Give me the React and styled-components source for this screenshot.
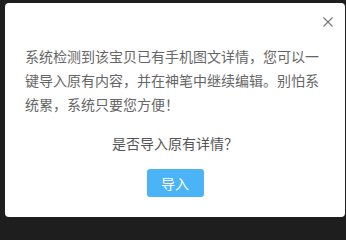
import React from "react";
import styled, { createGlobalStyle } from "styled-components";

const Global = createGlobalStyle`
  html, body {
    margin: 0;
    padding: 0;
    background: #1e1e1e;
  }
  body {
    font-family: "Noto Sans CJK SC", "Liberation Sans", sans-serif;
  }
`;

const Stage = styled.div`
  width: 346px;
  height: 223px;
  padding: 3px 1px 0 5px;
  box-sizing: border-box;
`;

const Dialog = styled.div`
  position: relative;
  width: 340px;
  height: 214px;
  background: #fff;
  border-radius: 4px;
  box-sizing: border-box;
  padding: 41px 20px 0 20px;
  display: flex;
  flex-direction: column;
  align-items: center;
`;

const Close = styled.button`
  position: absolute;
  top: 11px;
  right: 9px;
  width: 16px;
  height: 16px;
  padding: 0;
  border: 0;
  background: none;
  display: flex;
  align-items: center;
  justify-content: center;
`;

const Message = styled.p`
  margin: 0;
  align-self: stretch;
  font-size: 14px;
  line-height: 24px;
  color: #666;
`;

const Question = styled.p`
  margin: 17px 0 0;
  font-size: 14px;
  line-height: 20px;
  color: #555;
`;

const ImportButton = styled.button`
  margin-top: 16px;
  width: 57px;
  height: 28px;
  border: 0;
  border-radius: 3px;
  background: #4ab4f7;
  color: #fff;
  font-family: inherit;
  font-size: 14px;
  padding: 0;
`;

export default function App() {
  return (
    <Stage>
      <Global />
      <Dialog>
        <Close aria-label="关闭">
          <svg width="10" height="10" viewBox="0 0 10 10">
            <path d="M0.5 0.5L9.5 9.5M9.5 0.5L0.5 9.5" stroke="#777" strokeWidth="1.2" />
          </svg>
        </Close>
        <Message>
          系统检测到该宝贝已有手机图文详情，您可以一键导入原有内容，并在神笔中继续编辑。别怕系统累，系统只要您方便！
        </Message>
        <Question>是否导入原有详情？</Question>
        <ImportButton>导入</ImportButton>
      </Dialog>
    </Stage>
  );
}
